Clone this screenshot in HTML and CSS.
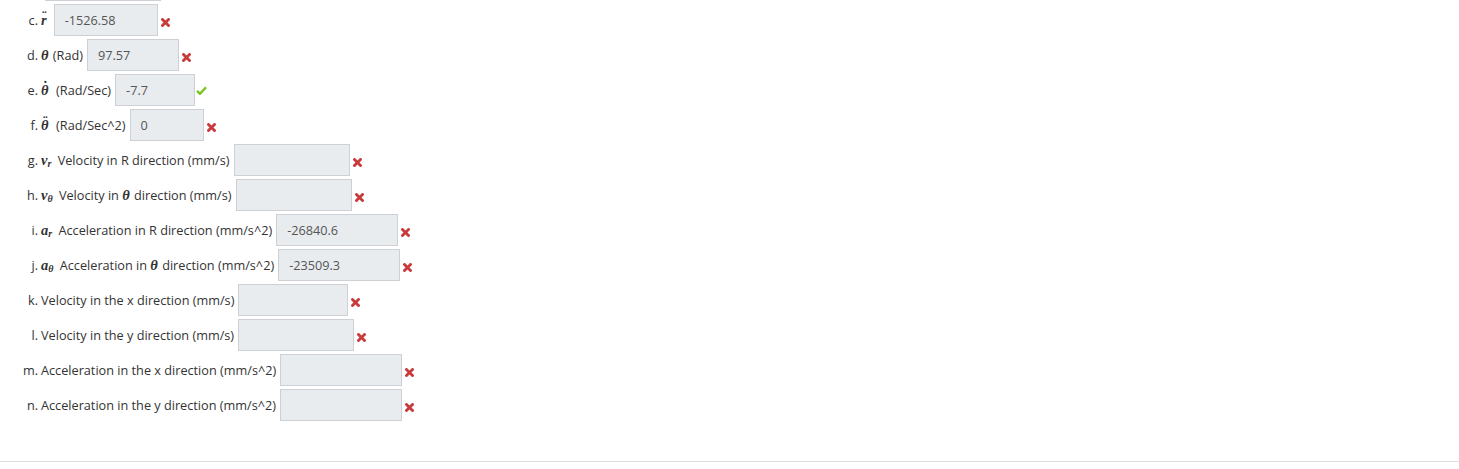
FILE: index.html
```html
<!DOCTYPE html>
<html lang="en">
  <head>
    <meta charset="UTF-8" />
    <meta name="viewport" content="width=device-width, initial-scale=1.0" />
    <title>Polar kinematics</title>
    <link rel="stylesheet" href="styles.css">
  </head>
  <body>
    <div class="sheet">
      <ol class="parts">
        <li class="part part-b">
          <span class="label"></span>
          <input class="answer w116" type="text" value="" readonly>
        </li>
        <li class="part">
          <span class="label"><i class="m acc solo">r<span class="dots">&uml;</span></i></span>
          <input class="answer w104" type="text" value="-1526.58" readonly>
          <span class="mark wrong"></span>
        </li>
        <li class="part">
          <span class="label"><i class="m">&theta;</i> (Rad)</span>
          <input class="answer w92" type="text" value="97.57" readonly>
          <span class="mark wrong"></span>
        </li>
        <li class="part">
          <span class="label"><i class="m acc">&theta;<span class="dots">&#729;</span></i>&nbsp; (Rad/Sec)</span>
          <input class="answer w80" type="text" value="-7.7" readonly>
          <span class="mark right"></span>
        </li>
        <li class="part">
          <span class="label"><i class="m acc">&theta;<span class="dots">&uml;</span></i>&nbsp; (Rad/Sec^2)</span>
          <input class="answer w74" type="text" value="0" readonly>
          <span class="mark wrong"></span>
        </li>
        <li class="part">
          <span class="label"><i class="m">v<sub>r</sub></i> Velocity in R direction (mm/s)</span>
          <input class="answer w116" type="text" value="" readonly>
          <span class="mark wrong"></span>
        </li>
        <li class="part">
          <span class="label"><i class="m">v<sub>&theta;</sub></i> Velocity in <i class="m">&theta;</i> direction (mm/s)</span>
          <input class="answer w116" type="text" value="" readonly>
          <span class="mark wrong"></span>
        </li>
        <li class="part">
          <span class="label"><i class="m">a<sub>r</sub></i> Acceleration in R direction (mm/s^2)</span>
          <input class="answer w122" type="text" value="-26840.6" readonly>
          <span class="mark wrong"></span>
        </li>
        <li class="part">
          <span class="label"><i class="m">a<sub>&theta;</sub></i> Acceleration in <i class="m">&theta;</i> direction (mm/s^2)</span>
          <input class="answer w122" type="text" value="-23509.3" readonly>
          <span class="mark wrong"></span>
        </li>
        <li class="part">
          <span class="label">Velocity in the x direction (mm/s)</span>
          <input class="answer w110" type="text" value="" readonly>
          <span class="mark wrong"></span>
        </li>
        <li class="part">
          <span class="label">Velocity in the y direction (mm/s)</span>
          <input class="answer w116" type="text" value="" readonly>
          <span class="mark wrong"></span>
        </li>
        <li class="part">
          <span class="label">Acceleration in the x direction (mm/s^2)</span>
          <input class="answer w122" type="text" value="" readonly>
          <span class="mark wrong"></span>
        </li>
        <li class="part">
          <span class="label">Acceleration in the y direction (mm/s^2)</span>
          <input class="answer w122" type="text" value="" readonly>
          <span class="mark wrong"></span>
        </li>
      </ol>
    </div>
    <hr class="rule">
  </body>
</html>
```

FILE: styles.css
```css
html,
body {
  margin: 0;
  padding: 0;
  background: #fff;
  font-family: "Open Sans", "Noto Sans", sans-serif;
  font-size: 12.7px;
  color: #333;
  overflow: hidden;
}

.sheet {
  height: 461px;
  overflow: hidden;
}

.parts {
  list-style: none;
  counter-reset: part 1;
  margin: -31px 0 0 0;
  padding: 0;
}

.part {
  counter-increment: part;
  display: flex;
  align-items: center;
  height: 32px;
  margin-bottom: 3px;
}

.part::before {
  content: counter(part, lower-alpha) ".";
  width: 38px;
  text-align: right;
  margin-right: 3px;
}

.part-b::before {
  visibility: hidden;
}

.label {
  white-space: nowrap;
}

.m {
  font-family: "Liberation Serif", "DejaVu Serif", serif;
  font-weight: bold;
  font-style: italic;
  font-size: 14.5px;
  margin-right: 1px;
}

.m sub {
  font-size: 10px;
  vertical-align: -2px;
  line-height: 0;
  margin-right: 2px;
}

.solo {
  margin-right: 3px;
}

.acc {
  position: relative;
  display: inline-block;
}

.dots {
  position: absolute;
  left: 1px;
  right: 0;
  top: -2px;
  line-height: 1;
  text-align: center;
  font-style: normal;
  font-size: 14px;
}

.answer {
  box-sizing: border-box;
  height: 32px;
  margin: 0 0 0 4px;
  padding: 0 10px;
  border: 1px solid #cdd1d5;
  background: #e9ecef;
  color: #555;
  font-family: inherit;
  font-size: 12.7px;
  outline: none;
}

.w74 { width: 74px; }
.w80 { width: 80px; }
.w92 { width: 92px; }
.w104 { width: 104px; }
.w110 { width: 110px; }
.w116 { width: 116px; }
.w122 { width: 122px; }

.mark {
  display: inline-block;
  margin: 5px 0 0 3px;
  width: 9px;
  height: 9px;
  background-repeat: no-repeat;
}

.wrong {
  background-image: url("data:image/svg+xml,%3Csvg xmlns='http://www.w3.org/2000/svg' viewBox='0 0 9 9'%3E%3Cpath d='M1.5 1.5l6 6M7.5 1.5l-6 6' stroke='%23c93a3a' stroke-width='2.8' stroke-linecap='square'/%3E%3C/svg%3E");
}

.right {
  width: 11px;
  margin-top: 0;
  margin-left: 1px;
  background-image: url("data:image/svg+xml,%3Csvg xmlns='http://www.w3.org/2000/svg' viewBox='0 0 11 9'%3E%3Cpath d='M1 4.8l3 3 6-6.5' fill='none' stroke='%2378c51e' stroke-width='2.4'/%3E%3C/svg%3E");
}

.rule {
  margin: 0;
  border: 0;
  border-top: 1px solid #dedede;
}
```
